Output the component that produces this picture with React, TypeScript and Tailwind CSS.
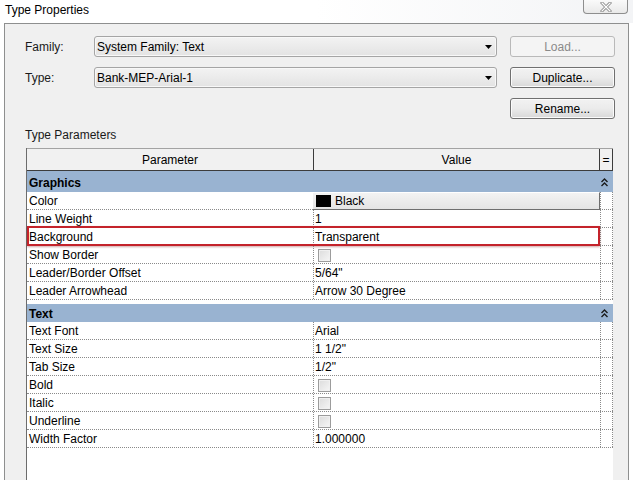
import React from 'react';

const font = { fontFamily: '"Liberation Sans", Arial, sans-serif' };

const ComboBox: React.FC<{ value: string }> = ({ value }) => (
    <div className="flex h-[21px] w-[403px] items-center justify-between rounded-[3px] border border-[#a5a5a5] bg-gradient-to-b from-[#f3f3f3] to-[#e3e3e3] pl-[2px] pr-[4px] shadow-[inset_0_0_0_1px_#f8f8f8]">
        <span className="text-[12px] text-black">{value}</span>
        <svg width="7" height="4" viewBox="0 0 7 4">
            <path d="M0 0h7L3.5 4z" fill="#000" />
        </svg>
    </div>
);

const Button: React.FC<{ label: string; disabled?: boolean }> = ({ label, disabled }) => (
    <div
        className={`flex h-[21px] w-[105px] items-center justify-center rounded-[3px] border text-[12px] ${
            disabled
                ? 'border-[#b9b9b9] bg-[#f4f4f4] text-[#8a8a8a]'
                : 'border-[#707070] bg-gradient-to-b from-[#f2f2f2] via-[#ebebeb] to-[#d8d8d8] text-black shadow-[inset_0_0_0_1px_#fbfbfb]'
        }`}
    >
        {label}
    </div>
);

const CheckBox = () => (
    <div className="ml-[3px] h-[13px] w-[13px] border border-[#9c9c9c] bg-gradient-to-br from-[#dcdcdc] to-[#f6f6f6] shadow-[inset_0_0_0_1px_#f0f0f0]" />
);

const Chevrons = () => (
    <svg width="7" height="9" viewBox="0 0 7 9">
        <path d="M0.5 4L3.5 1L6.5 4M0.5 8L3.5 5L6.5 8" fill="none" stroke="#1b1b1b" strokeWidth="1.4" />
    </svg>
);

interface RowProps {
    name: string;
    children?: React.ReactNode;
    highlight?: boolean;
}

const Row: React.FC<RowProps> = ({ name, children, highlight }) => (
    <div className="relative flex h-[18px] border-b border-dotted border-[#8a8a8a] text-[12px] text-black">
        <div className="w-[286px] pl-[2px] pt-[2px] leading-[15px]">{name}</div>
        <div className="flex w-[287px] items-center border-l border-dotted border-[#8a8a8a] pl-[1px] pt-[2px] leading-[15px]">
            {children}
        </div>
        <div className="w-[13px] border-l border-r border-dotted border-[#8a8a8a]" />
        {highlight && (
            <div className="absolute -top-[2px] -bottom-[1px] left-0 right-[13px] border-2 border-[#c4232b] shadow-[0_1px_2px_rgba(120,0,0,0.35)]" />
        )}
    </div>
);

const Section: React.FC<{ title: string; className?: string }> = ({ title, className }) => (
    <div className={`flex items-center justify-between bg-[#99b3d1] pl-[2px] pr-[5px] text-[12px] font-bold text-black ${className ?? ''}`}>
        <span>{title}</span>
        <Chevrons />
    </div>
);

export default function App() {
    return (
        <div className="flex h-[480px] w-[633px] flex-col overflow-hidden bg-white" style={font}>
            {/* title bar */}
            <div className="flex h-[23px] items-start justify-between bg-gradient-to-r from-white via-white to-[#f3f4f6]">
                <span className="pl-[5px] pt-[2px] text-[12px] leading-[16px] text-black">Type Properties</span>
                <div className="mr-[5px] flex h-[14px] w-[45px] items-center justify-center rounded-b-[4px] border border-t-0 border-[#8e8e8e] bg-gradient-to-b from-[#fafafa] to-[#e9e9e9]">
                    <svg width="12" height="10" viewBox="0 0 12 10">
                        <path d="M2 1L10 9M10 1L2 9" stroke="#8d8d8d" strokeWidth="3" strokeLinecap="square" />
                        <path d="M2 1L10 9M10 1L2 9" stroke="#ffffff" strokeWidth="1.2" strokeLinecap="square" />
                    </svg>
                </div>
            </div>

            {/* dialog body */}
            <div className="ml-[4px] flex w-[625px] flex-1 flex-col border border-b-0 border-[#8e8f8f] bg-[#f0f0f0] pl-[20px] pt-[12px]">
                <div className="flex items-center">
                    <span className="w-[69px] text-[12px] text-[#1a1a1a]">Family:</span>
                    <ComboBox value="System Family: Text" />
                    <div className="ml-[13px]">
                        <Button label="Load..." disabled />
                    </div>
                </div>
                <div className="mt-[10px] flex items-center">
                    <span className="w-[69px] text-[12px] text-[#1a1a1a]">Type:</span>
                    <ComboBox value="Bank-MEP-Arial-1" />
                    <div className="ml-[13px]">
                        <Button label="Duplicate..." />
                    </div>
                </div>
                <div className="mt-[10px] flex">
                    <div className="w-[485px]" />
                    <Button label="Rename..." />
                </div>

                <div className="mt-[9px] h-[14px] text-[12px] leading-[14px] text-[#1a1a1a]">Type Parameters</div>

                {/* parameter grid */}
                <div className="ml-[1px] mt-[6px] flex w-[587px] flex-1 flex-col border-l border-[#6c6c6c] bg-white">
                    <div className="flex h-[23px] border-t border-b border-t-[#a3a3a3] border-b-[#3c3c3c] bg-[#f1f1f1] text-[12px] text-black">
                        <div className="flex w-[286px] items-center justify-center">Parameter</div>
                        <div className="flex w-[287px] items-center justify-center border-l border-r border-[#3c3c3c]">Value</div>
                        <div className="flex w-[13px] items-center justify-center border-r border-[#3c3c3c] leading-none">=</div>
                    </div>

                    <Section title="Graphics" className="h-[21px] pt-[2px]" />
                    <Row name="Color">
                        <div className="-ml-[2px] -mt-[2px] flex h-[18px] w-[287px] items-center border-b border-r border-t border-b-[#6e6e6e] border-r-[#6e6e6e] border-t-white bg-gradient-to-b from-[#f3f3f3] to-[#e4e4e4] pl-[3px] pt-[1px]">
                            <div className="h-[12px] w-[15px] bg-black" />
                            <span className="ml-[4px]">Black</span>
                        </div>
                    </Row>
                    <Row name="Line Weight">1</Row>
                    <Row name="Background" highlight>Transparent</Row>
                    <Row name="Show Border">
                        <CheckBox />
                    </Row>
                    <Row name="Leader/Border Offset">5/64"</Row>
                    <Row name="Leader Arrowhead">Arrow 30 Degree</Row>

                    <Section title="Text" className="mt-[4px] h-[18px] pt-[1px]" />
                    <Row name="Text Font">Arial</Row>
                    <Row name="Text Size">1 1/2"</Row>
                    <Row name="Tab Size">1/2"</Row>
                    <Row name="Bold">
                        <CheckBox />
                    </Row>
                    <Row name="Italic">
                        <CheckBox />
                    </Row>
                    <Row name="Underline">
                        <CheckBox />
                    </Row>
                    <Row name="Width Factor">1.000000</Row>
                </div>
            </div>
        </div>
    );
}
